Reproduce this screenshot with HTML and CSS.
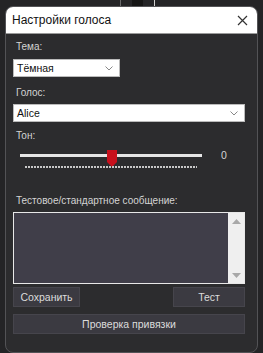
FILE: index.html
```html
<!DOCTYPE html>
<html lang="ru">
<head>
  <meta charset="UTF-8">
  <title>Настройки голоса</title>
  <link rel="stylesheet" href="styles.css">
</head>
<body>
  <div class="dialog">
    <div class="titlebar">
      <span>Настройки голоса</span>
      <svg class="close" width="11" height="11" viewBox="0 0 11 11"><path d="M1 1L10 10M10 1L1 10" stroke="#333" stroke-width="1.2"/></svg>
    </div>
    <div class="content">
      <div class="label first">Тема:</div>
      <div class="select short"><span>Тёмная</span><svg width="8" height="5" viewBox="0 0 8 5"><path d="M0.5 0.5L4 4L7.5 0.5" fill="none" stroke="#888" stroke-width="1"/></svg></div>
      <div class="label">Голос:</div>
      <div class="select"><span>Alice</span><svg width="8" height="5" viewBox="0 0 8 5"><path d="M0.5 0.5L4 4L7.5 0.5" fill="none" stroke="#888" stroke-width="1"/></svg></div>
      <div class="label tone">Тон:</div>
      <div class="slider-row">
        <div class="slider">
          <div class="track"></div>
          <svg class="thumb" width="10" height="17" viewBox="0 0 10 17"><path d="M0 0H10V12L5 17L0 12Z" fill="#c8101c"/></svg>
          <div class="ticks"></div>
        </div>
        <div class="value">0</div>
      </div>
      <div class="label msg">Тестовое/стандартное сообщение:</div>
      <div class="textarea">
        <div class="text"></div>
        <div class="scrollbar">
          <svg width="9" height="5" viewBox="0 0 9 5"><path d="M0 5L4.5 0L9 5Z" fill="#a8a8a8"/></svg>
          <svg width="9" height="5" viewBox="0 0 9 5"><path d="M0 0L4.5 5L9 0Z" fill="#a8a8a8"/></svg>
        </div>
      </div>
      <div class="buttons">
        <button class="btn">Сохранить</button>
        <button class="btn test">Тест</button>
      </div>
      <button class="btn wide">Проверка привязки</button>
    </div>
  </div>
</body>
</html>
```

FILE: styles.css
```css
body { margin: 0; padding: 6px 5px 7px; background-color: #242426; font-family: "Liberation Sans", Arial, sans-serif;
  background-image: linear-gradient(90deg, transparent 120px, #6a6a6a 120px, #6a6a6a 121px, transparent 121px, transparent 132px, #151515 132px, #151515 143px, transparent 143px, transparent 154px, #d0d0d0 154px, #d0d0d0 155px, transparent 155px); }
.dialog { width: 251px; border: 1px solid #535356; border-radius: 8px; background: #2c2c2e; overflow: hidden; }
.titlebar { height: 26px; background: #fff; border-bottom: 1px solid #9a9a9a; display: flex; align-items: center; justify-content: space-between; padding: 0 9px 0 6px; font-size: 12px; color: #111; }
.close { margin-top: 1px; }
.content { padding: 0 12px 18px 7px; }
.label { font-size: 10px; line-height: 14px; color: #d4d4d4; padding-left: 3px; margin-top: 9px; }
.label.first { margin-top: 6px; }
.label.tone { margin-top: 7px; }
.label.msg { margin-top: 23px; }
.select { height: 18px; background: #fff; border: 1px solid #bbb; box-sizing: border-box; display: flex; align-items: center; justify-content: space-between; padding: 0 6px 0 3px; font-size: 10.5px; color: #111; margin-top: 4px; }
.select.short { width: 107px; margin-top: 5px; }
.slider-row { display: flex; align-items: flex-start; height: 24px; margin-top: 4px; }
.slider { position: relative; width: 182px; margin-left: 7px; height: 24px; }
.track { position: absolute; left: 0; right: 0; top: 7px; height: 3px; background: #e6e6e6; }
.thumb { position: absolute; left: 87px; top: 3px; }
.ticks { position: absolute; left: 5px; right: 5px; top: 19px; height: 2px; background: repeating-linear-gradient(90deg, #c8c8c8 0 2px, transparent 2px 3px); }
.value { font-size: 10.5px; color: #d4d4d4; margin-left: 19px; margin-top: 2px; }
.textarea { display: flex; height: 72px; border: 1px solid #e8e8e8; box-sizing: border-box; margin-top: 4px; background: #403e49; }
.text { flex: 1; }
.scrollbar { width: 16px; background: #efefef; display: flex; flex-direction: column; justify-content: space-between; align-items: center; padding: 6px 0 5px; box-sizing: border-box; }
.buttons { display: flex; justify-content: space-between; margin-top: 3px; }
.btn { height: 20px; background: #3b3a41; border: 1px solid #46454c; color: #dcdcdc; font-family: inherit; font-size: 10.5px; padding: 0; cursor: pointer; }
.btn:hover { background: #45444c; }
.buttons .btn { width: 67px; }
.buttons .test { width: 72px; }
.wide { width: 100%; margin-top: 7px; display: block; }
```
